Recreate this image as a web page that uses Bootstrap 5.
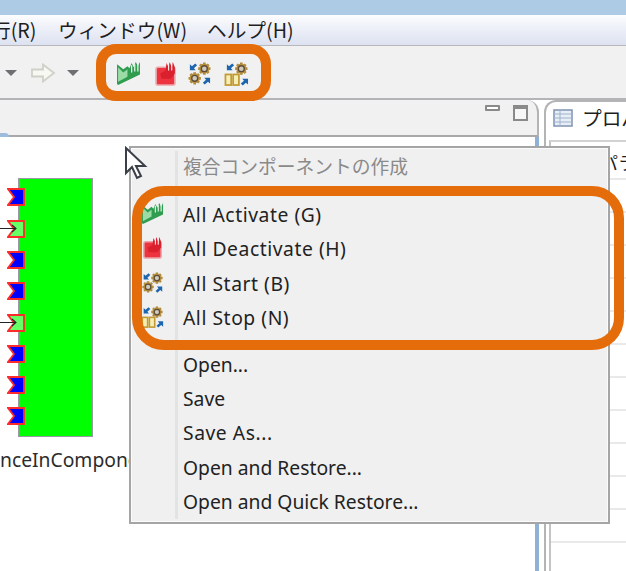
<!DOCTYPE html>
<html lang="ja">

<head>
  <meta charset="UTF-8">
  <title>RT System Editor</title>
  <link href="https://cdn.jsdelivr.net/npm/bootstrap@5.3.3/dist/css/bootstrap.min.css" rel="stylesheet">
  <style>
    body {
      width: 626px;
      height: 571px;
      overflow: hidden;
      position: relative;
      background: #fff;
      font-family: "Noto Sans CJK JP", "Noto Sans", sans-serif;
      color: #1e1e1e;
      font-size: 18px;
    }

    .title-strip {
      height: 15px;
      background: #aecbe6;
    }

    .menu-strip {
      height: 31px;
      background: linear-gradient(#fdfdfe 0, #f2f4fa 30%, #dde2f1 100%);
      border-bottom: 1px solid #b9b9bd;
      font-size: 19.7px;
      line-height: 29px;
      white-space: nowrap;
      overflow: hidden;
    }

    .menu-r {
      margin-left: -9px;
      width: 67px;
      flex-shrink: 0;
    }

    .menu-w {
      width: 149px;
      flex-shrink: 0;
    }

    .tool-strip {
      height: 54px;
      padding-top: 2px;
      background: #f1f1f1;
      border-bottom: 2px solid #b4b4b6;
    }

    .drop-arrow {
      width: 0;
      height: 0;
      border-left: 6px solid transparent;
      border-right: 6px solid transparent;
      border-top: 6px solid #6e6f72;
    }

    .drop-first {
      margin-left: 5px;
    }

    .tool-forward {
      margin-left: 13px;
    }

    .drop-second {
      margin-left: 11px;
    }

    .tool-icons {
      margin-left: 37px;
      gap: 12px;
    }

    .tool-pull {
      margin-left: -3px;
    }

    .ic-soft {
      filter: blur(.35px);
    }

    .work-area {
      height: 471px;
      background: #fff;
    }

    .left-pane {
      width: 539px;
    }

    .left-head {
      height: 37px;
      padding: 5px 9px 0 0;
      gap: 13px;
      border-right: 2px solid #b4b4b4;
      border-bottom: 2px solid #a8a8a8;
      border-top-right-radius: 12px;
      background: #f1f1f1;
      position: relative;
    }

    .head-corner {
      position: absolute;
      left: 0;
      bottom: -2px;
      width: 9px;
      height: 4px;
      background: #9dbcdc;
      border-top-right-radius: 4px;
    }

    .pane-btn-min {
      width: 15px;
      height: 6px;
      border: 2px solid #8a8a8a;
      border-radius: 1px;
      background: #fff;
    }

    .pane-btn-max {
      width: 15px;
      height: 16px;
      border: 2px solid #8a8a8a;
      border-top-width: 4px;
      background: #f7f7f7;
    }

    .left-body {
      height: 434px;
      background: #fff;
      border-right: 4px solid #8fb1d6;
      position: relative;
    }

    .right-pane {
      margin-left: 5px;
      min-width: 0;
      flex: 1;
      border-left: 2px solid #b4b4b4;
      border-top: 2px solid #b4b4b4;
      border-top-left-radius: 12px;
    }

    .right-tab {
      height: 38px;
      padding-left: 7px;
      font-size: 19.7px;
      line-height: 32px;
      white-space: nowrap;
      overflow: hidden;
    }

    .tab-icon {
      margin: 7px 9px 0 0;
      flex-shrink: 0;
    }

    .right-body {
      height: 431px;
      margin-left: 3px;
      border-left: 2px solid #c4c4c4;
      border-top: 2px solid #d2d2d2;
      font-size: 18px;
      overflow: hidden;
    }

    .prop-head {
      height: 38px;
      padding: 8px 0 0 49px;
      line-height: 24px;
      white-space: nowrap;
      border-bottom: 2px solid #e9e9e9;
    }

    .prop-row {
      height: 33px;
      border-bottom: 2px solid #e9e9e9;
    }

    /* diagram */
    .comp-box {
      position: absolute;
      left: 18px;
      top: 41px;
      width: 75px;
      height: 259px;
      background: #00ff00;
      border: 1px solid #9a9aa6;
    }

    .port {
      position: absolute;
      left: 7px;
      width: 18px;
      height: 18px;
    }

    .comp-wire {
      position: absolute;
      left: 0;
    }

    .comp-name {
      position: absolute;
      left: 0;
      top: 311px;
      font-family: "Noto Sans", sans-serif;
      font-size: 19.3px;
      line-height: 24px;
      white-space: nowrap;
      color: #2c2c2c;
    }

    /* popup menu */
    .ctx-menu {
      position: absolute;
      left: 129px;
      top: 146px;
      width: 481px;
      height: 378px;
      background: #f0f0f0;
      border: 2px solid #a5a5a5;
      box-shadow: inset 0 0 0 1px #fbfbfb;
      padding: 1px 3px;
      font-family: "Noto Sans", "Noto Sans CJK JP", sans-serif;
      font-size: 19.3px;
    }

    .ctx-gutter {
      position: absolute;
      left: 44px;
      top: 3px;
      bottom: 3px;
      width: 3px;
      background: #e2e3e3;
    }

    .ctx-item {
      height: 34.4px;
      line-height: 34px;
      padding-left: 49px;
      position: relative;
      color: #222;
    }

    .ctx-spaced {
      letter-spacing: .55px;
    }

    .ctx-disabled {
      color: #8a8a8a;
      font-family: "Noto Sans CJK JP", sans-serif;
      font-size: 18.75px;
      height: 33px;
    }

    .ctx-gap-top {
      height: 16px;
    }

    .ctx-gap {
      height: 12px;
    }

    .ctx-icon {
      position: absolute;
      left: 7px;
      top: 4px;
    }

    .hl-box {
      position: absolute;
      border: 10px solid #e46c0a;
      border-radius: 20px;
      pointer-events: none;
    }

    .hl-tool {
      left: 96px;
      top: 44px;
      width: 175px;
      height: 57px;
    }

    .hl-menu {
      left: 132px;
      top: 186px;
      width: 492px;
      height: 164px;
      border-radius: 32px;
    }

    .mouse-arrow {
      position: absolute;
      left: 124px;
      top: 146px;
    }
  </style>
</head>

<body>

  <svg width="0" height="0" class="position-absolute">
    <defs>
      <symbol id="ic-activate" viewBox="0 0 24 24">
        <path d="M1 3 L7 8 L11 5 L13 7 L15 2 L17 6 L19 1 L21 5 L23 1 L23 13 L2 23 L1 22 Z" fill="#2f9c50" />
        <path d="M2 6 L7 11 L11 8 L11 15 L2 20 Z" fill="#9bdca6" />
        <path d="M15 4V11M18 3V10M21 3V10" stroke="#e9f8e9" stroke-width="1.200" />
      </symbol>
      <symbol id="ic-deactivate" viewBox="0 0 24 24">
        <rect x="3" y="6" width="18" height="17" rx="2" fill="#ee3340" stroke="#eaa3a8" stroke-width="1.600" />
        <path d="M7 12 L12 9 L13 2 L15 6 L16 1 L18 6 L19 1 L21 6 L21 12 L17 17 L8 17 Z" fill="#d9202c" />
        <path d="M15 4V9M18 3V9" stroke="#fff" stroke-width="1" />
      </symbol>
      <symbol id="ic-gear" viewBox="0 0 14 14">
        <path d="M7 .6V13.400M.6 7H13.400M2.500 2.500L11.500 11.500M11.500 2.500L2.500 11.500" stroke="#b08a3a" stroke-width="2.800" />
        <circle cx="7" cy="7" r="5.200" fill="#b8923f" />
        <circle cx="7" cy="7" r="3.100" fill="#cfcabb" stroke="#5f4c38" stroke-width="1.400" />
      </symbol>
      <symbol id="ic-start" viewBox="0 0 26 26">
        <use href="#ic-gear" x="11" y="1" width="14" height="14" />
        <use href="#ic-gear" x="1" y="11" width="14" height="14" />
        <path d="M3 3.500 L3 9.500 L9 9.500 L7.200 7.500 L10.500 4.500 L8.500 2.500 L5.200 5.500 Z" fill="#1d65ad" />
        <path d="M24 23.500 L24 17.500 L18 17.500 L19.800 19.500 L16.500 22.500 L18.500 24.500 L21.800 21.500 Z" fill="#1d65ad" />
      </symbol>
      <symbol id="ic-stop" viewBox="0 0 26 26">
        <use href="#ic-gear" x="11" y="1" width="14" height="14" />
        <rect x="1.500" y="14" width="6" height="11" fill="#f6eeb4" stroke="#c19a32" stroke-width="1.800" />
        <rect x="9.500" y="14" width="6" height="11" fill="#f6eeb4" stroke="#c19a32" stroke-width="1.800" />
        <path d="M3 3.500 L3 9.500 L9 9.500 L7.200 7.500 L10.500 4.500 L8.500 2.500 L5.200 5.500 Z" fill="#1d65ad" />
        <path d="M25 24.500 L25 18.500 L19 18.500 L20.800 20.500 L17.500 23.500 L19.500 25.500 L22.800 22.500 Z" fill="#1d65ad" />
      </symbol>
      <symbol id="port-blue" viewBox="0 0 18 18">
        <path d="M1 1 H17 V17 H1 L7 9 Z" fill="#0000ff" stroke="#ff2a2a" stroke-width="1.800" />
      </symbol>
      <symbol id="port-green" viewBox="0 0 18 18">
        <path d="M1 1 H17 V17 H1 L7 9 Z" fill="#66ff66" stroke="#ff2a2a" stroke-width="1.800" />
      </symbol>
      <symbol id="wire-in" viewBox="0 0 17 9">
        <path d="M0 4.500H16M12 1L16 4.500L12 8" fill="none" stroke="#222" stroke-width="1.100" />
      </symbol>
    </defs>
  </svg>

  <div class="title-strip"></div>

  <div class="menu-strip d-flex">
    <span class="menu-r">行(R)</span>
    <span class="menu-w">ウィンドウ(W)</span>
    <span>ヘルプ(H)</span>
  </div>

  <div class="tool-strip d-flex align-items-center">
    <span class="drop-arrow drop-first"></span>
    <svg class="tool-forward" width="26" height="20" viewBox="0 0 26 20">
      <path d="M2 6.500H13V1.500L24 10L13 18.500V13.500H2Z" fill="#f8f8f2" stroke="#cfd0c8" stroke-width="1.800" />
    </svg>
    <span class="drop-arrow drop-second"></span>
    <div class="tool-icons d-flex align-items-center">
      <svg class="ic-soft" width="25" height="25"><use href="#ic-activate" /></svg>
      <svg class="ic-soft" width="25" height="25"><use href="#ic-deactivate" /></svg>
      <svg class="ic-soft tool-pull" width="25" height="25"><use href="#ic-start" /></svg>
      <svg class="ic-soft" width="25" height="25"><use href="#ic-stop" /></svg>
    </div>
  </div>

  <div class="work-area d-flex">
    <div class="left-pane flex-shrink-0">
      <div class="left-head d-flex justify-content-end align-items-start">
        <span class="head-corner"></span>
        <span class="pane-btn-min"></span>
        <span class="pane-btn-max"></span>
      </div>
      <div class="left-body">
        <div class="comp-box"></div>
        <svg class="port" style="top:51px"><use href="#port-blue" /></svg>
        <svg class="port" style="top:83px"><use href="#port-green" /></svg>
        <svg class="comp-wire" width="17" height="9" style="top:87px"><use href="#wire-in" /></svg>
        <svg class="port" style="top:114px"><use href="#port-blue" /></svg>
        <svg class="port" style="top:145px"><use href="#port-blue" /></svg>
        <svg class="port" style="top:177px"><use href="#port-green" /></svg>
        <svg class="comp-wire" width="17" height="9" style="top:181px"><use href="#wire-in" /></svg>
        <svg class="port" style="top:208px"><use href="#port-blue" /></svg>
        <svg class="port" style="top:239px"><use href="#port-blue" /></svg>
        <svg class="port" style="top:270px"><use href="#port-blue" /></svg>
        <div class="comp-name">nceInCompone</div>
      </div>
    </div>
    <div class="right-pane">
      <div class="right-tab d-flex align-items-start">
        <svg class="tab-icon" width="20" height="18" viewBox="0 0 20 18">
          <rect x="1" y="1" width="18" height="16" fill="#e8eef6" stroke="#7f93b2" stroke-width="1.500" />
          <path d="M1 5H19M1 9H19M1 13H19M7 1V17" stroke="#9fb2cc" />
        </svg>
        <span>プロパ</span>
      </div>
      <div class="right-body">
        <div class="prop-head">パラ</div>
        <div class="prop-row"></div>
        <div class="prop-row"></div>
        <div class="prop-row"></div>
        <div class="prop-row"></div>
        <div class="prop-row"></div>
        <div class="prop-row"></div>
        <div class="prop-row"></div>
        <div class="prop-row"></div>
        <div class="prop-row"></div>
        <div class="prop-row"></div>
        <div class="prop-row"></div>
      </div>
    </div>
  </div>

  <div class="ctx-menu">
    <div class="ctx-gutter"></div>
    <div class="ctx-item ctx-disabled">複合コンポーネントの作成</div>
    <div class="ctx-gap-top"></div>
    <div class="ctx-item ctx-spaced"><svg class="ctx-icon ic-soft" width="23" height="23"><use href="#ic-activate" /></svg>All Activate (G)</div>
    <div class="ctx-item ctx-spaced"><svg class="ctx-icon ic-soft" width="23" height="23"><use href="#ic-deactivate" /></svg>All Deactivate (H)</div>
    <div class="ctx-item ctx-spaced"><svg class="ctx-icon ic-soft" width="23" height="23"><use href="#ic-start" /></svg>All Start (B)</div>
    <div class="ctx-item ctx-spaced"><svg class="ctx-icon ic-soft" width="23" height="23"><use href="#ic-stop" /></svg>All Stop (N)</div>
    <div class="ctx-gap"></div>
    <div class="ctx-item">Open...</div>
    <div class="ctx-item">Save</div>
    <div class="ctx-item ctx-spaced">Save As...</div>
    <div class="ctx-item">Open and Restore...</div>
    <div class="ctx-item">Open and Quick Restore...</div>
  </div>

  <div class="hl-box hl-tool"></div>
  <div class="hl-box hl-menu"></div>

  <svg class="mouse-arrow" width="24" height="36" viewBox="0 0 24 36">
    <path d="M2 2 V27 L8 21 L13 32 L17 30 L12 20 L21 20 Z" fill="#fff" stroke="#3a3f48" stroke-width="2" />
  </svg>

  <script src="https://cdn.jsdelivr.net/npm/bootstrap@5.3.3/dist/js/bootstrap.bundle.min.js"></script>
</body>

</html>
